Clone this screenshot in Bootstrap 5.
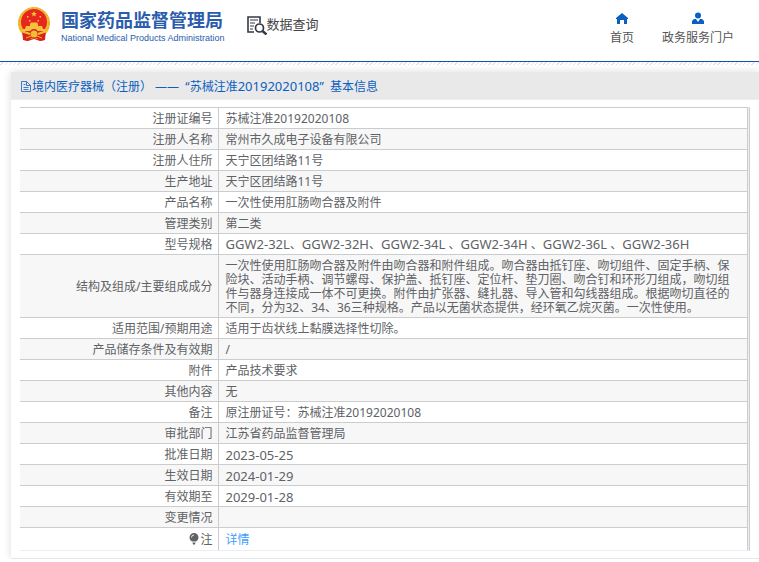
<!DOCTYPE html>
<html lang="zh-CN">
<head>
<meta charset="utf-8">
<meta name="viewport" content="width=device-width, initial-scale=1">
<title>数据查询 - 国家药品监督管理局</title>
<link rel="stylesheet" href="https://cdn.jsdelivr.net/npm/bootstrap@5.3.0/dist/css/bootstrap.min.css">
<style>
body{font-family:"Noto Sans","Noto Sans CJK SC",sans-serif;font-size:12px;line-height:14px;color:#606266;background:#fff}
.site-head{padding:6px 25px 6px 17px;min-height:62px;border-bottom:1px solid #0b58b0}
.hatch{height:3px;background:repeating-linear-gradient(135deg,#fff 0 2px,#e4e4e6 2px 3px)}
.brand{color:#2b5cad;padding:0 0 0 10px}
.brand-cn{font:bold 18px/26px "Noto Sans CJK SC",sans-serif}
.brand-en{font:400 9px/12px "Liberation Sans",sans-serif}
.query{color:#444;font-size:13px;line-height:20px;padding:8px 0 0 22px}
.top-nav{gap:28px}
.top-link{color:#555;line-height:16px;padding-top:6px}
.top-link svg{display:block;margin-bottom:5px}
.panel-box{margin:7px 0 0 11px;border-bottom:1px solid #e6e6ea;box-shadow:0 0 8px rgba(0,0,0,.14)}
.panel-title{background:#e9e9e9;color:#0b5fc0;border-bottom:1px solid #ebeef5;padding:7px 9px 5px;line-height:15px;font-size:12px}
.frame{margin:7px 9px 7px 9px;padding-right:1px;background:#ebeef5;border-right:1px solid #ccccd2}
.info{width:100%;table-layout:fixed;border-collapse:collapse;background:#fff}
.info col:first-child{width:198px}
.info th,.info td{border:solid #ccc;border-width:1px 1px 0 0;padding:4px 14px 2px 7px;height:21px;font-weight:400;vertical-align:middle}
.info th{padding-right:5px}
.info tr:nth-child(even){background:#f7f7f7}
.info tr:last-child th,.info tr:last-child td{height:23px;border-bottom:1px solid #ebeef5}
.info a{color:#409eff}
.num{font-size:13px;line-height:12px}
.bulb{vertical-align:-1px}
</style>
<script src="https://cdn.jsdelivr.net/npm/bootstrap@5.3.0/dist/js/bootstrap.bundle.min.js"></script>
</head>
<body>
<header class="site-head d-flex align-items-start">
<svg width="34" height="36" viewBox="0 0 34 36" aria-hidden="true">
<path d="M5 24 6 34l5 1 6-2 6 2 5-1 1-10z" fill="#e02a20"/>
<circle cx="17" cy="17" r="16" fill="#f2bd2e"/><circle cx="17" cy="17" r="15" fill="none" stroke="#dda62b" stroke-dasharray="2 2"/>
<circle cx="17" cy="16" r="13" fill="#e8261e"/>
<path d="m17 5 .8 2h2.200l-1.800 1.400.7 2.200-1.900-1.300-1.900 1.300.7-2.200L14 7h2.200z" fill="#f6cc39"/>
<path d="M10 10h1.500v1.500H10zm2 4h1.500v1.500H12zm8.500 0H22v1.500h-1.500zm2-4H24v1.500h-1.500z" fill="#f6cc39"/>
<path d="M13 18l1-1.500h6l1 1.500v2h4l1 3H8l1-3h4zM6 23h22v2H6z" fill="#f3c43a"/>
<path d="m5 26 8 1a4 4 0 0 1 8 0l8-1-2 8-4 1-3-3-3 1-3-1-3 3-4-1z" fill="#d9221c"/>
<path d="m4 25 9 3m17-3-9 3" fill="none" stroke="#f1bd34" stroke-width="2"/>
<path d="m9 32 5-2m11 2-5-2" fill="none" stroke="#f1bd34"/>
<circle cx="17" cy="28" r="3.500" fill="#f1bd34"/>
</svg>
<div class="brand text-nowrap"><div class="brand-cn">国家药品监督管理局</div><div class="brand-en">National Medical Products Administration</div></div>
<div class="query d-flex text-nowrap">
<svg width="20" height="21" viewBox="0 0 20 21" fill="none" stroke="#353746" aria-hidden="true"><path d="M7 18H1V3h12v6" stroke-width="1.600"/><path d="M3 6h8M3 9h5M3 12h4M3 15h3"/><circle cx="12.500" cy="14" r="4" stroke-width="1.700"/><path d="m15.500 17 4 3.500" stroke-width="2.400"/></svg>
<span>数据查询</span></div>
<nav class="top-nav d-flex ms-auto text-nowrap">
<a href="#" class="top-link d-flex flex-column align-items-center text-decoration-none"><svg width="12" height="13" viewBox="0 0 12 13" fill="#0b5fc0" aria-hidden="true"><path d="M6 1 0 6v1h1v5h3V8h4v4h3V7h1V6z"/></svg>首页</a>
<a href="#" class="top-link d-flex flex-column align-items-center text-decoration-none"><svg width="12" height="13" viewBox="0 0 12 13" fill="#0b5fc0" aria-hidden="true"><circle cx="6" cy="3.500" r="3"/><path d="M0 12V9l2-2h2l2 3 2-3h2l2 2v3z"/></svg>政务服务门户</a>
</nav>
</header>
<div class="hatch"></div>
<main class="panel-box">
<div class="panel-title d-flex text-nowrap"><svg width="12" height="15" viewBox="0 0 12 15" fill="none" stroke="#0b5fc0" stroke-width=".8" aria-hidden="true"><path d="M1.500 2.500h5l4 4v6h-9zM6.500 2.500v4h4M3.500 5.500h2M3.500 8.500h5M3.500 10.500h5"/></svg><span>境内医疗器械（注册） ——&nbsp; “苏械注准<span class="num">20192020108</span>”&nbsp; 基本信息</span></div>
<div class="frame">
<table class="info">
<colgroup><col><col></colgroup>
<tbody class="text-break">
<tr><th scope="row" class="text-end">注册证编号</th><td>苏械注准20192020108</td></tr>
<tr><th scope="row" class="text-end">注册人名称</th><td>常州市久成电子设备有限公司</td></tr>
<tr><th scope="row" class="text-end">注册人住所</th><td>天宁区团结路11号</td></tr>
<tr><th scope="row" class="text-end">生产地址</th><td>天宁区团结路11号</td></tr>
<tr><th scope="row" class="text-end">产品名称</th><td>一次性使用肛肠吻合器及附件</td></tr>
<tr><th scope="row" class="text-end">管理类别</th><td>第二类</td></tr>
<tr><th scope="row" class="text-end">型号规格</th><td><span class="num">GGW2-32L</span>、<span class="num">GGW2-32H</span>、<span class="num">GGW2-34L</span> 、<span class="num">GGW2-34H</span> 、<span class="num">GGW2-36L</span> 、<span class="num">GGW2-36H</span></td></tr>
<tr><th scope="row" class="text-end">结构及组成/主要组成成分</th><td>一次性使用肛肠吻合器及附件由吻合器和附件组成。吻合器由抵钉座、吻切组件、固定手柄、保险块、活动手柄、调节螺母、保护盖、抵钉座、定位杆、垫刀圈、吻合钉和环形刀组成，吻切组件与器身连接成一体不可更换。附件由扩张器、缝扎器、导入管和勾线器组成。根据吻切直径的不同，分为32、34、36三种规格。产品以无菌状态提供，经环氧乙烷灭菌。一次性使用。</td></tr>
<tr><th scope="row" class="text-end">适用范围/预期用途</th><td>适用于齿状线上黏膜选择性切除。</td></tr>
<tr><th scope="row" class="text-end">产品储存条件及有效期</th><td>/</td></tr>
<tr><th scope="row" class="text-end">附件</th><td>产品技术要求</td></tr>
<tr><th scope="row" class="text-end">其他内容</th><td>无</td></tr>
<tr><th scope="row" class="text-end">备注</th><td>原注册证号：苏械注准20192020108</td></tr>
<tr><th scope="row" class="text-end">审批部门</th><td>江苏省药品监督管理局</td></tr>
<tr><th scope="row" class="text-end">批准日期</th><td class="num">2023-05-25</td></tr>
<tr><th scope="row" class="text-end">生效日期</th><td class="num">2024-01-29</td></tr>
<tr><th scope="row" class="text-end">有效期至</th><td class="num">2029-01-28</td></tr>
<tr><th scope="row" class="text-end">变更情况</th><td></td></tr>
<tr><th scope="row" class="text-end"><svg class="bulb" width="11" height="12" viewBox="0 0 11 12" fill="#606266" aria-hidden="true"><path d="M5 0a4.500 4.500 0 0 0-2 8.500h4A4.500 4.500 0 0 0 5 0zM3.500 9.500h3L6 11.500H4z"/><path d="M2.500 4.500A2.500 2.500 0 0 1 5 2" fill="none" stroke="#fff" stroke-width=".8"/></svg>注</th><td><a href="#" class="text-decoration-none">详情</a></td></tr>
</tbody>
</table>
</div>
</main>
</body>
</html>
